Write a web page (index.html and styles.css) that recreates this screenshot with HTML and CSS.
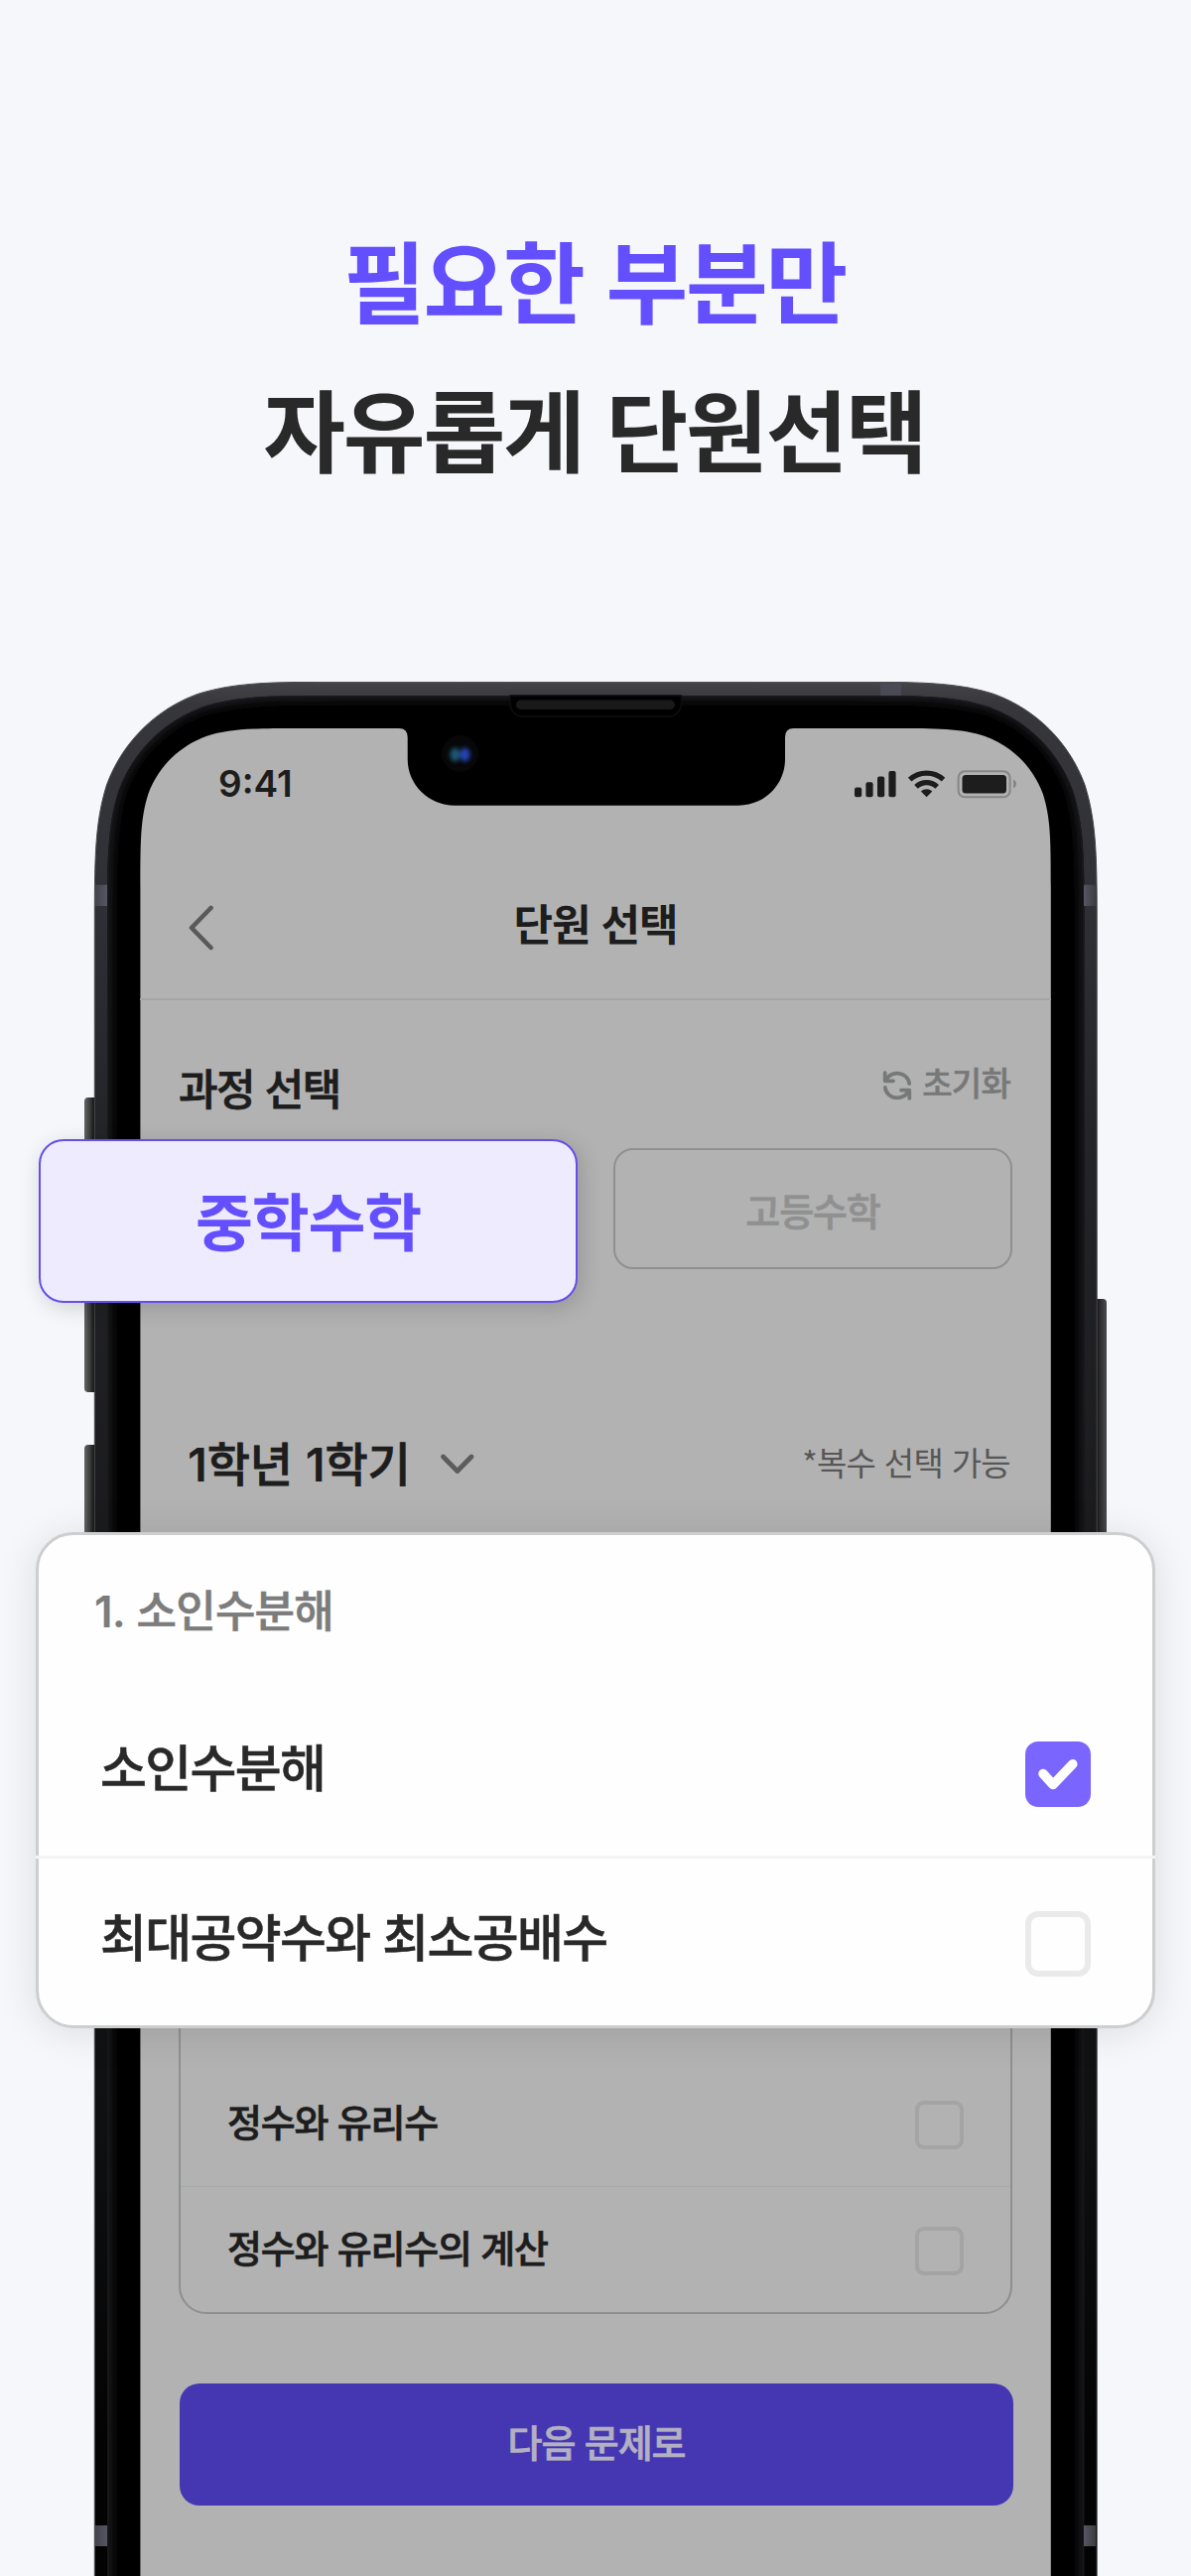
FILE: index.html
```html
<!DOCTYPE html>
<html lang="ko">
<head>
<meta charset="utf-8">
<title>단원 선택</title>
<link rel="stylesheet" href="styles.css">
</head>
<body>
<main class="promo">
  <h1 class="headline"><span class="headline-accent">필요한 부분만</span><span>자유롭게 단원선택</span></h1>

  <section class="phone">
    <svg class="phone-frame" viewBox="85 687 1030 1909" aria-hidden="true">
      <defs>
        <linearGradient id="metal" gradientUnits="userSpaceOnUse" x1="0" y1="687" x2="0" y2="2596">
          <stop offset="0" stop-color="#434348"/>
          <stop offset=".012" stop-color="#36363b"/>
          <stop offset=".12" stop-color="#2f3035"/>
          <stop offset=".23" stop-color="#242529"/>
          <stop offset=".45" stop-color="#1b1b1e"/>
          <stop offset=".76" stop-color="#0f1012"/>
          <stop offset=".93" stop-color="#030303"/>
        </linearGradient>
        <linearGradient id="keyLeft"><stop offset="0" stop-color="#636565"/><stop offset=".5" stop-color="#3d3f3f"/><stop offset="1" stop-color="#060606"/></linearGradient>
        <linearGradient id="keyRight"><stop offset="0" stop-color="#111113"/><stop offset=".3" stop-color="#2b2b2d"/><stop offset="1" stop-color="#4a4b4c"/></linearGradient>
        <linearGradient id="band" gradientUnits="userSpaceOnUse" x1="96" y1="0" x2="108" y2="0"><stop offset="0" stop-color="#43434c"/><stop offset="1" stop-color="#565664"/></linearGradient>
        <linearGradient id="bandRight" gradientUnits="userSpaceOnUse" x1="1092" y1="0" x2="1104" y2="0"><stop offset="0" stop-color="#565664"/><stop offset="1" stop-color="#3c3c42"/></linearGradient>
        <filter id="soften" x="-20%" y="-20%" width="140%" height="140%"><feGaussianBlur stdDeviation="6"/></filter>
        <filter id="lens" x="-60%" y="-60%" width="220%" height="220%"><feGaussianBlur stdDeviation="2"/></filter>
        <clipPath id="glassClip"><path d="M108 2700V933.4C108 866.6 108 833 119.4 797C133.7 757.7 164.7 726.7 204 712.4C240 701 273.6 701 340.4 701H860.1C926.9 701 960.5 701 996.5 712.4C1035.8 726.7 1066.8 757.7 1081.1 797C1092.5 833 1092.5 866.6 1092.5 933.4V2700Z"/></clipPath>
      </defs>
      <path fill="url(#keyLeft)" d="M96 1106h-7a4 4 0 0 0-4 4v56h11ZM96 1280h-11v119a4 4 0 0 0 4 4h7ZM96 1456h-7a4 4 0 0 0-4 4v120h11Z"/>
      <path fill="url(#keyRight)" d="M1105 1309h6a4 4 0 0 1 4 4v250h-10Z"/>
      <path fill="url(#metal)" stroke="#4b4b4e" stroke-width="1" d="M95.3 2700V939C95.3 866.6 95.3 830.3 107.4 791.2C122.9 748.5 156.5 714.9 199.2 699.4C238.3 687.3 274.6 687.3 347 687.3H853.5C925.9 687.3 962.2 687.3 1001.3 699.4C1044 714.9 1077.6 748.5 1093.1 791.2C1105.2 830.3 1105.2 866.6 1105.2 939V2700Z"/>
      <path fill="#4a4a57" d="M887 688.5h21V701h-21Z"/>
      <g clip-path="url(#glassClip)">
        <path fill="#000" d="M100 690h1000v1950H100Z"/>
        <path fill="none" stroke="#242426" stroke-width="15" filter="url(#soften)" d="M104 2700V933.4C104 866.6 104 830 115.4 794C130 754 162 722.7 201 708.4C240 697 273.6 697 340.4 697H860.1C926.9 697 960.5 697 999.5 708.4C1038.8 722.7 1070.8 754 1085.1 794C1096.5 830 1096.5 866.6 1096.5 933.4V2700"/>
      </g>
      <path fill="url(#band)" d="M96 891.7h12v21.3H96ZM96 2545h12v21H96Z"/>
      <path fill="url(#bandRight)" d="M1092 891.7h12v21.3h-12ZM1092 2545h12v21h-12Z"/>
      <path fill="#000" stroke="#0e0e0f" stroke-width="1.5" d="M514 701V709a13 13 0 0 0 13 13H673.5a13 13 0 0 0 13-13V701Z"/>
      <rect x="520" y="705.5" width="160" height="9.5" rx="4.7" fill="#19191a"/>
      <path fill="#b2b2b2" d="M141.4 2700V894.5C141.4 848.3 141.4 825.2 149.3 800.3C159.2 773.1 180.5 751.8 207.7 741.9C232.6 734 255.7 734 301.9 734H402Q410.7 734 410.7 743V765C410.7 791 432 811.7 458 811.7H744C770 811.7 791 791 791 765V743Q791 734 799.5 734H898.3C944.5 734 967.6 734 992.5 741.9C1019.7 751.8 1041 773.1 1050.9 800.3C1058.8 825.2 1058.8 848.3 1058.8 894.5V2700Z"/>
      <circle cx="463.6" cy="759.5" r="18.5" fill="#070708"/>
      <g filter="url(#lens)"><ellipse cx="458.5" cy="760.5" rx="5" ry="7" fill="#1b5670"/><ellipse cx="468.5" cy="760.5" rx="5" ry="7" fill="#2742b4"/></g>
    </svg>

    <div class="screen">
      <div class="status-bar">
        <span class="clock">9:41</span>
        <svg class="status-icons" width="164" height="30" viewBox="861 775 164 30" aria-hidden="true">
          <g fill="#1d1d1d">
            <rect x="861" y="793.5" width="7.2" height="9.8" rx="2"/><rect x="872.4" y="788.3" width="7.2" height="15" rx="2"/><rect x="884" y="782.6" width="7.2" height="20.7" rx="2"/><rect x="895.4" y="777" width="7.2" height="26.3" rx="2"/>
            <path d="M933.6 803.3l-5.7-5.8a8.3 8.3 0 0 1 11.4 0Z"/>
            <rect x="969.5" y="781" width="44.5" height="18.4" rx="3.5"/>
          </g>
          <g fill="none" stroke="#1d1d1d" stroke-width="5.2"><path d="M916.7 785.7a25 25 0 0 1 33.8 0"/><path d="M923 792.8a15.3 15.3 0 0 1 21.2 0"/></g>
          <rect x="965.6" y="777.3" width="52" height="26" rx="6.5" fill="none" stroke="#868686" stroke-width="2"/>
          <path fill="#868686" d="M1021 785.6c4 1.8 4 7 0 8.8Z"/>
        </svg>
      </div>

      <header class="app-bar">
        <svg class="back" width="26" height="46" viewBox="0 0 26 46" aria-hidden="true"><path d="M23.5 3L4 23L23.5 43"/></svg>
        <h2 class="app-title">단원 선택</h2>
      </header>

      <section class="course">
        <div class="course-head">
          <h3 class="section-title">과정 선택</h3>
          <div class="reset">
            <svg width="30" height="30" viewBox="0 0 30 30" aria-hidden="true"><path d="M2.7 2.2V10.3H11M3 10C6.3 4.5 10.5 2.6 15 2.6C21.5 2.6 26.5 7.3 27.2 13M27.3 27.8V19.7H19M27 20C23.7 25.5 19.5 27.4 15 27.4C8.5 27.4 3.5 22.7 2.8 17"/></svg>
            <span>초기화</span>
          </div>
        </div>
        <div class="options">
          <div class="option-slot"><div class="option option-active">중학수학</div></div>
          <div class="option">고등수학</div>
        </div>
      </section>

      <section class="units">
        <div class="units-head">
          <div class="grade"><span class="grade-name"><b class="num">1</b>학년 <b class="num">1</b>학기</span><svg width="36" height="24" viewBox="0 0 36 24" aria-hidden="true"><path d="M3.5 4L17.8 18.5L32 4"/></svg></div>
          <span class="hint">*복수 선택 가능</span>
        </div>
        <div class="unit-list">
          <div class="unit"><span>정수와 유리수</span><i class="check"></i></div>
          <div class="unit"><span>정수와 유리수의 계산</span><i class="check"></i></div>
        </div>
      </section>

      <div class="next">다음 문제로</div>
    </div>
  </section>

  <section class="picker">
    <h3 class="picker-title"><b class="num">1.</b> 소인수분해</h3>
    <div class="picker-row"><span>소인수분해</span>
      <svg class="picker-check" width="66" height="66" viewBox="0 0 66 66" aria-hidden="true"><rect width="66" height="66" rx="13" fill="#7a66ff"/><path d="M18 32.5L28 43.5L47.8 22.8" fill="none" stroke="#fff" stroke-width="9.5" stroke-linecap="round" stroke-linejoin="round"/></svg>
    </div>
    <div class="picker-row"><span>최대공약수와 최소공배수</span><i class="picker-check picker-empty"></i></div>
  </section>
</main>
</body>
</html>
```
FILE: styles.css
```css
* { box-sizing: border-box; }

body {
  margin: 0;
  background: #f6f7fb;
  color: #1d1d1d;
  font-family: "Noto Sans CJK KR", sans-serif;
}

h1, h2, h3 { margin: 0; }

.num {
  font-family: Inter, sans-serif;
  font-weight: 600;
  line-height: 0;
  -webkit-text-stroke: 0;
}

.promo {
  position: relative;
  width: 1200px;
  height: 2596px;
  overflow: hidden;
}

.headline {
  display: flex;
  flex-direction: column;
  align-items: center;
  height: 687px;
  padding: 206px 2px 0 0;
  color: #292929;
  font-size: 90px;
  font-weight: 700;
  letter-spacing: -0.025em;
  line-height: 149.5px;
}
.headline-accent { color: #644fff; }

/* phone */
.phone {
  position: relative;
  height: 1909px;
  padding: 47px 141px 0;
}
.phone-frame {
  position: absolute;
  top: 0;
  left: 85px;
  width: 1030px;
  height: 1909px;
}
.screen {
  position: relative;
  letter-spacing: -1.1px;
}

.status-bar {
  display: flex;
  justify-content: space-between;
  align-items: center;
  height: 112px;
  padding: 0 34px 0 79px;
}
.clock {
  font: 600 37px/44px Inter, sans-serif;
  letter-spacing: 0;
}

.app-bar {
  display: grid;
  grid-template-columns: 1fr auto 1fr;
  align-items: center;
  height: 162px;
  padding: 6px 48px 0;
  border-bottom: 2px solid #a5a5a5;
}
.back {
  margin-top: 11px;
  fill: none;
  stroke: #595959;
  stroke-width: 4.6;
  stroke-linecap: round;
  stroke-linejoin: round;
}
.app-title { font-size: 43px; line-height: 64px; }

.course { padding: 55px 39px 0; }
.course-head {
  display: flex;
  justify-content: space-between;
  align-items: center;
  height: 64px;
}
.section-title {
  font-size: 43px;
  font-weight: 500;
  letter-spacing: -1.5px;
  -webkit-text-stroke: 0.8px currentColor;
}
.reset {
  display: flex;
  align-items: center;
  gap: 10px;
  margin-top: -11px;
  padding-right: 2px;
  color: #777878;
  font-size: 33px;
  font-weight: 500;
  letter-spacing: -0.8px;
  line-height: 48px;
  -webkit-text-stroke: 0.5px currentColor;
}
.reset svg {
  margin-top: 8px;
  fill: none;
  stroke: currentColor;
  stroke-width: 3.8;
  stroke-linecap: round;
  stroke-linejoin: round;
}

.options {
  display: grid;
  grid-template-columns: 1fr 402px;
  gap: 36px;
  height: 122px;
  margin-top: 30px;
}
.option-slot { position: relative; }
.option {
  display: flex;
  justify-content: center;
  align-items: center;
  border: 2.5px solid #8f9090;
  border-radius: 20px;
  color: #8f9090;
  font-size: 38px;
  font-weight: 500;
  -webkit-text-stroke: 0.7px currentColor;
}
.option-active {
  position: absolute;
  top: -9px;
  left: -141px;
  width: 543px;
  height: 165px;
  padding-bottom: 7px;
  border-color: #644fe8;
  border-radius: 25px;
  background: #efebff;
  box-shadow: 3px 5px 22px rgba(0, 0, 0, 0.16);
  color: #644fff;
  font-size: 63px;
  font-weight: 700;
  letter-spacing: -0.02em;
  -webkit-text-stroke: 0;
}

.units { padding: 162px 39px 0; }
.units-head {
  display: flex;
  justify-content: space-between;
  align-items: center;
  height: 64px;
}
.grade {
  display: flex;
  align-items: center;
  gap: 29px;
  padding-left: 9px;
  font-size: 47px;
  font-weight: 500;
  letter-spacing: -0.2px;
  line-height: 64px;
  -webkit-text-stroke: 0.8px currentColor;
}
.grade svg {
  margin-top: 6px;
  fill: none;
  stroke: #5c5c5c;
  stroke-width: 4.8;
  stroke-linecap: round;
  stroke-linejoin: round;
}
.hint {
  padding-right: 2px;
  color: #575757;
  font-size: 33px;
  letter-spacing: -0.7px;
}

.unit-list {
  height: 773px;
  margin-top: 54px;
  padding-top: 515px;
  border: 2px solid #8e8f8f;
  border-radius: 28px;
}
.unit {
  display: flex;
  justify-content: space-between;
  align-items: center;
  height: 127px;
  padding: 0 47px;
  font-size: 38px;
  font-weight: 500;
  letter-spacing: -1.2px;
  -webkit-text-stroke: 0.7px currentColor;
}
.unit + .unit { border-top: 1px solid #a8a9a9; }
.unit span { padding-bottom: 7px; }
.check {
  width: 49px;
  height: 49px;
  margin-top: 3px;
  border: 4.5px solid #a4a4a4;
  border-radius: 9px;
}

.next {
  display: flex;
  justify-content: center;
  align-items: center;
  height: 123px;
  margin: 70px 38px 0 40px;
  padding-bottom: 8px;
  border-radius: 20px;
  background: #4537b1;
  color: #b3b0c2;
  font-size: 38px;
  font-weight: 500;
  -webkit-text-stroke: 0.7px currentColor;
}

/* enlarged unit picker floating over the phone */
.picker {
  position: absolute;
  top: 1544px;
  left: 36px;
  width: 1128px;
  height: 500px;
  border: 3px solid #cdcece;
  border-radius: 38px;
  background: #fefefe;
  box-shadow: 0 4px 40px rgba(0, 0, 0, 0.11);
  color: #292929;
}
.picker-title {
  height: 155px;
  padding: 42px 0 0 56px;
  color: #7c7c7c;
  font-size: 44px;
  font-weight: 500;
  letter-spacing: -0.8px;
  line-height: 64px;
  -webkit-text-stroke: 0.6px currentColor;
}
.picker-row {
  display: flex;
  justify-content: space-between;
  align-items: center;
  height: 168px;
  padding: 0 62px;
  font-size: 51px;
  font-weight: 500;
  letter-spacing: -1.65px;
  -webkit-text-stroke: 0.5px currentColor;
}
.picker-row span { padding-bottom: 14px; }
.picker-row + .picker-row {
  height: 171px;
  margin: 0 -3px;
  padding: 0 65px;
  border-top: 3px solid #f4f4f4;
}
.picker-check { flex: none; margin-top: 3px; }
.picker-empty {
  width: 66px;
  height: 66px;
  border: 6px solid #eaeaea;
  border-radius: 13px;
}
```
